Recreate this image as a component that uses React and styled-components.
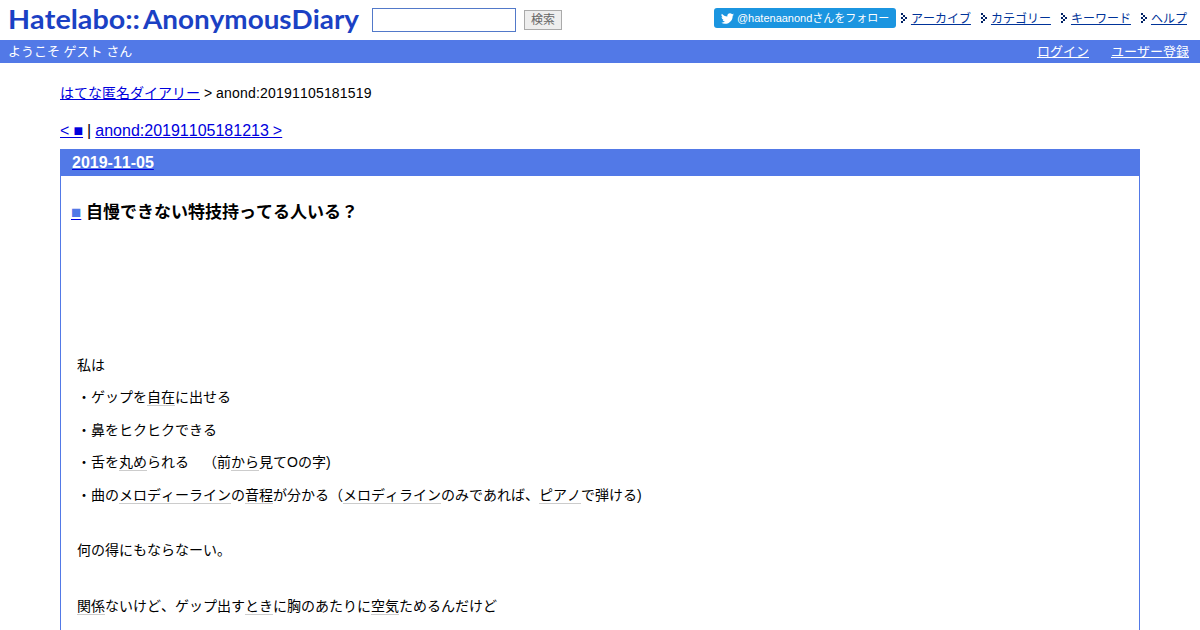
import React from 'react'
import styled, { createGlobalStyle } from 'styled-components'

const GlobalStyle = createGlobalStyle`
  body {
    margin: 0;
    background: #fff;
    color: #000;
    font-family: "Liberation Sans", "Noto Sans CJK JP", sans-serif;
    font-kerning: none;
    text-spacing-trim: space-all;
    overflow: hidden;
  }
  a {
    color: #0000dd;
    text-decoration-skip-ink: none;
  }
`

const Header = styled.header`
  display: flex;
  align-items: flex-start;
  height: 40px;
`
const Logo = styled.svg`
  display: block;
  width: 372px;
  height: 40px;
`
const LogoText = styled.text`
  font-family: Lato, sans-serif;
  font-size: 27px;
  font-weight: 700;
  fill: #1b41c4;
`
const SearchForm = styled.form`
  display: flex;
  align-items: flex-start;
  gap: 8px;
  padding-top: 8px;
`
const SearchInput = styled.input`
  box-sizing: border-box;
  width: 144px;
  height: 24px;
  margin: 0;
  border: 1px solid #5279c9;
  background: #fff;
`
const SearchButton = styled.button`
  box-sizing: border-box;
  width: 38px;
  height: 20px;
  margin: 2px 0 0;
  padding: 0;
  border: 1px solid #aaa;
  background: #eee;
  color: #666;
  font-family: inherit;
  font-size: 12px;
  line-height: 17px;
`
const HeaderNav = styled.nav`
  display: flex;
  margin-left: auto;
  padding: 8px 13px 0 0;
`
const FollowButton = styled.a`
  display: flex;
  align-items: center;
  box-sizing: border-box;
  width: 182px;
  height: 20px;
  padding-left: 7px;
  border-radius: 3px;
  background: #1b95e0;
  color: #fff;
  font-size: 11px;
  line-height: 20px;
  text-decoration: none;
  white-space: nowrap;
`
const Bird = styled.svg`
  width: 13px;
  height: 13px;
  margin-right: 3px;
`
const HeaderLink = styled.span`
  display: flex;
  margin-left: ${props => props.$first ? '5px' : '10px'};
  font-size: 12px;
  line-height: 22px;
  & a {
    color: #003399;
  }
`
const Arrow = styled.svg`
  width: 7px;
  height: 10px;
  margin: 5px 3px 0 0;
`

const GuestBar = styled.div`
  display: flex;
  box-sizing: border-box;
  height: 23px;
  padding: 0 11px 0 8px;
  background: #5279e7;
  color: #fff;
  font-size: 13px;
  line-height: 23px;
`
const GuestLinks = styled.div`
  display: flex;
  gap: 22px;
  margin-left: auto;
  & a {
    color: #fff;
  }
`

const Main = styled.main`
  padding: 20px 60px 0;
`
const Breadcrumb = styled.div`
  font-size: 14px;
  line-height: 20px;
`
const EntryId = styled.span`
  letter-spacing: 0.2px;
`
const Pager = styled.div`
  margin-top: 18px;
  font-size: 16px;
  line-height: 20px;
  word-spacing: -0.4px;
`
const Day = styled.section`
  margin-top: 8px;
  height: 500px;
  border: 1px solid #5279e7;
`
const DayTitle = styled.h2`
  margin: 0;
  padding-left: 11px;
  background: #5279e7;
  font-size: 16px;
  line-height: 26px;
  & span {
    color: #fff;
  }
`
const Section = styled.div`
  padding: 24px 10px 0;
`
const Title = styled.h3`
  margin: 0 0 127.6px;
  font-size: 17px;
  line-height: 26px;
  & span {
    color: #5279e7;
  }
`
const Paragraph = styled.p`
  margin: 0 6px ${props => props.$last ? '33.2px' : '10.1px'};
  font-size: 14px;
  line-height: 22.4px;
`
const Keyword = styled.span`
  border-bottom: 1px solid #ccc;
`

const arrowRows = [
  '11.....',
  '11.....',
  '..11...',
  '..11...',
  '11..11.',
  '11..11.',
  '..11...',
  '..11...',
  '11.....',
  '11.....',
]

function ArrowIcon() {
  return (
    <Arrow viewBox="0 0 7 10" shapeRendering="crispEdges">
      {arrowRows.map((row, y) => row.split('').map((dot, x) => (
        dot === '1' && <rect key={x + '-' + y} x={x} y={y} width="1" height="1" fill="#002266" />
      )))}
    </Arrow>
  )
}

function BirdIcon() {
  return (
    <Bird viewBox="0 0 24 24">
      <path fill="#fff" d="M23.95 4.57a10 10 0 0 1-2.82.77 4.96 4.96 0 0 0 2.16-2.72c-.95.55-2 .96-3.13 1.18a4.92 4.92 0 0 0-8.38 4.48C7.69 8.1 4.07 6.13 1.64 3.16a4.92 4.92 0 0 0 1.52 6.57 4.9 4.9 0 0 1-2.23-.61v.06a4.92 4.92 0 0 0 3.95 4.83 5 5 0 0 1-2.21.08 4.94 4.94 0 0 0 4.6 3.42A9.87 9.87 0 0 1 0 19.54a14 14 0 0 0 7.55 2.21c9.05 0 14-7.5 14-13.98 0-.21 0-.42-.02-.63a9.94 9.94 0 0 0 2.46-2.55z" />
    </Bird>
  )
}

const navItems = ['アーカイブ', 'カテゴリー', 'キーワード', 'ヘルプ']

const App = () => {
  return (
    <>
      <GlobalStyle />
      <Header>
        <Logo viewBox="0 0 372 40">
          <LogoText x="8" y="29" textLength="132" lengthAdjust="spacingAndGlyphs">Hatelabo::</LogoText>
          <LogoText x="143" y="29" textLength="216" lengthAdjust="spacingAndGlyphs">AnonymousDiary</LogoText>
        </Logo>
        <SearchForm>
          <SearchInput type="text" />
          <SearchButton type="button">検索</SearchButton>
        </SearchForm>
        <HeaderNav>
          <FollowButton href="#"><BirdIcon />@hatenaanondさんをフォロー</FollowButton>
          {navItems.map((item, i) => (
            <HeaderLink key={item} $first={i === 0}><ArrowIcon /><a href="#">{item}</a></HeaderLink>
          ))}
        </HeaderNav>
      </Header>
      <GuestBar>
        ようこそ ゲスト さん
        <GuestLinks>
          <a href="#">ログイン</a>
          <a href="#">ユーザー登録</a>
        </GuestLinks>
      </GuestBar>
      <Main>
        <Breadcrumb><a href="#">はてな匿名ダイアリー</a> &gt; <EntryId>anond:20191105181519</EntryId></Breadcrumb>
        <Pager><a href="#">&lt; ■</a> | <a href="#">anond:20191105181213 &gt;</a></Pager>
        <Day>
          <DayTitle><a href="#"><span>2019-11-05</span></a></DayTitle>
          <Section>
            <Title><a href="#"><span>■</span></a> 自慢できない特技持ってる人いる？</Title>
            <Paragraph>私は</Paragraph>
            <Paragraph>・ゲップを<Keyword>自在</Keyword>に出せる</Paragraph>
            <Paragraph>・鼻をヒクヒクできる</Paragraph>
            <Paragraph>・舌を<Keyword>丸め</Keyword>られる　（前<Keyword>から</Keyword>見てOの字)</Paragraph>
            <Paragraph $last>・曲の<Keyword>メロディーライン</Keyword>の<Keyword>音程</Keyword>が分かる（<Keyword>メロディライン</Keyword>のみであれば、<Keyword>ピアノ</Keyword>で弾ける)</Paragraph>
            <Paragraph $last>何の得にもならなーい。</Paragraph>
            <Paragraph><Keyword>関係</Keyword>ないけど、ゲップ出す<Keyword>とき</Keyword>に胸のあたりに<Keyword>空気</Keyword>ためるんだけど</Paragraph>
          </Section>
        </Day>
      </Main>
    </>
  )
}

export default App
